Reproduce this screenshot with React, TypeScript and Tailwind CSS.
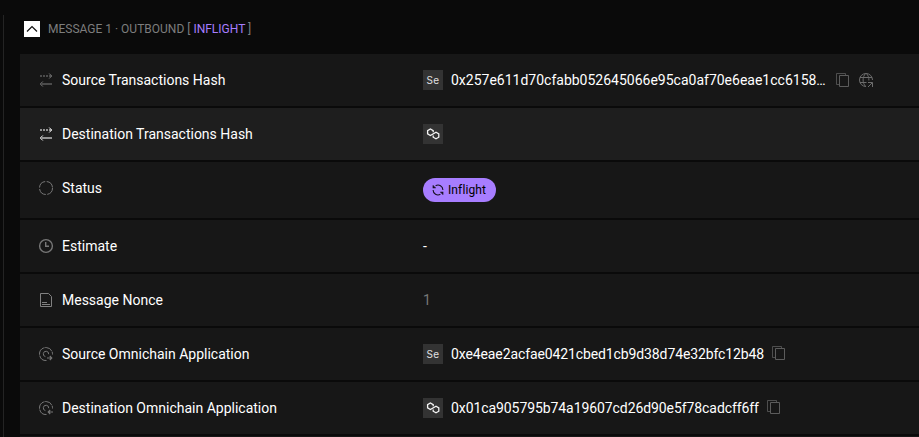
import type { ReactNode } from "react";

function TransferIcon({ bright = false }: { bright?: boolean }) {
  return (
    <svg width="16" height="16" viewBox="0 0 16 16" fill="none" className={bright ? "text-[#f4f4f4]" : "text-[#777]"}>
      <path d="M2 4h2M5 4h2M8 4h2" stroke="currentColor" strokeWidth="2" strokeOpacity=".55" />
      <path d="M11 4h2.5M3.5 12H14" stroke="currentColor" strokeWidth="2" strokeOpacity=".55" />
      <path d="M11.2 1.5 13.7 4l-2.5 2.5M4.8 9.5 2.3 12l2.5 2.5" stroke="currentColor" />
    </svg>
  );
}

function StatusIcon() {
  return (
    <svg width="16" height="16" viewBox="0 0 16 16" fill="none">
      <circle cx="8" cy="8" r="6.5" stroke="#777" strokeDasharray="8.6 1.6" />
    </svg>
  );
}

function ClockIcon() {
  return (
    <svg width="16" height="16" viewBox="0 0 16 16" fill="none" stroke="#777">
      <circle cx="8" cy="8" r="6.4" strokeWidth="1.4" />
      <path d="M7.7 4v4.3H11" strokeWidth="1.4" />
    </svg>
  );
}

function DocIcon() {
  return (
    <svg width="16" height="16" viewBox="0 0 16 16" fill="none" stroke="#808080">
      <path d="M2.5 1.5h8l3 3v10h-11zM4 10.5h5M4 12.5h8" />
    </svg>
  );
}

function AppIcon({ incoming = false }: { incoming?: boolean }) {
  return (
    <svg width="16" height="16" viewBox="0 0 16 16" fill="none" stroke="#777">
      <path d="M8.5 14.5A6.5 6.5 0 1 1 14.5 8.5" strokeDasharray="9 .6" />
      <path d="M7.4 10.6A2.7 2.7 0 1 1 10.7 8.2" />
      {incoming ? (
        <path d="M15 12H10.5M12.2 10l-2 2 2 2" strokeWidth="1.1" />
      ) : (
        <path d="M9 12h4.5M11.8 10l2 2-2 2" strokeWidth="1.1" />
      )}
    </svg>
  );
}

function CopyIcon() {
  return (
    <svg width="14" height="16" viewBox="0 0 14 16" fill="none" stroke="#5c5c5c" className="shrink-0">
      <path d="M3.5 3.5h9v11h-9z" />
      <path d="M3.5 12.5h-3V1.5h9v2" strokeOpacity=".8" />
    </svg>
  );
}

function GlobeIcon() {
  return (
    <svg width="16" height="16" viewBox="0 0 16 16" fill="none" stroke="#6c6c6c" className="shrink-0">
      <path d="M8 14.5A6.5 6.5 0 1 1 14.5 8" />
      <path d="M2 5.5h12M2 10.5h6.5M7.5 14.2C4.3 11 4.3 5 7.5 1.6M8.5 1.6c1.8 2 2.5 4.2 2.4 6.9" />
      <path d="M10 10.5h4.5V15M14.3 10.7 10 15" />
    </svg>
  );
}

function SeChip() {
  return (
    <span className="flex size-5 shrink-0 items-center justify-center bg-[#333] font-['Inter',sans-serif] text-[10px] leading-none tracking-[0.4px] text-[#e0e0e0]">
      Se
    </span>
  );
}

function PolygonChip() {
  return (
    <span className="flex size-5 shrink-0 items-center justify-center bg-[#333]">
      <svg width="20" height="20" viewBox="0 0 20 20" fill="none" stroke="#f4f4f4" strokeWidth="1.3">
        <path d="M10.2 8.2V6.6L7.4 5 4.6 6.6v3.3l2.8 1.6 5.6-3.2 2.8 1.6v3.3L13 14.8l-2.8-1.6v-1.7" />
      </svg>
    </span>
  );
}

function Row({ icon, label, children, className = "h-13 bg-[#171717]" }: { icon: ReactNode; label: string; children: ReactNode; className?: string }) {
  return (
    <div className={`flex shrink-0 items-start pt-4 pl-[18px] ${className}`}>
      <div className="flex h-5 w-[385px] shrink-0 items-center gap-2">
        {icon}
        <span>{label}</span>
      </div>
      <div className="flex min-h-5 items-center gap-2">{children}</div>
    </div>
  );
}

export default function App() {
  return (
    <div className="flex h-[437px] w-[919px] overflow-hidden bg-[#0a0a0a] pl-[3px] font-['Roboto',sans-serif] text-sm leading-5 text-white">
      <div className="mt-[15px] w-px shrink-0 bg-[#242424]" />
      <main className="ml-4 flex min-w-0 flex-1 flex-col">
        <header className="flex h-[54px] shrink-0 items-center pt-1 pl-1 text-xs text-[#7d7d7d]">
          <button className="flex size-4 items-center justify-center bg-white">
            <svg width="16" height="16" viewBox="0 0 16 16" fill="none" stroke="#111" strokeWidth="1.2">
              <path d="m3 10.5 5-5 5 5" />
            </svg>
          </button>
          <span className="ml-2 whitespace-pre">
            MESSAGE 1 · OUTBOUND [ <span className="text-[#a77dff]">INFLIGHT</span> ]
          </span>
        </header>
        <div className="flex flex-col gap-0.5">
          <Row icon={<TransferIcon />} label="Source Transactions Hash">
            <SeChip />
            <span className="w-[377px] whitespace-nowrap">0x257e611d70cfabb052645066e95ca0af70e6eae1cc6158…</span>
            <span className="flex items-center gap-2">
              <CopyIcon />
              <GlobeIcon />
            </span>
          </Row>
          <Row icon={<TransferIcon bright />} label="Destination Transactions Hash" className="h-13 bg-[#1e1e1e]">
            <PolygonChip />
          </Row>
          <Row icon={<StatusIcon />} label="Status" className="h-14 bg-[#171717]">
            <span className="flex h-6 w-[73px] items-center gap-[3px] rounded-full bg-[#a77dff] pl-2 text-xs tracking-[0.11px] text-black">
              <svg width="14" height="14" viewBox="0 0 14 14" fill="none" stroke="#171020" strokeWidth="1.1">
                <path d="M4.6 2.7A4.9 4.9 0 0 1 11.9 7M9.4 11.3A4.9 4.9 0 0 1 2.1 7M2.2 2.2v2.6h2.6M11.8 11.8V9.2H9.2M2.3 4.7l1.2-1.2M11.7 9.3l-1.2 1.2" />
              </svg>
              Inflight
            </span>
          </Row>
          <Row icon={<ClockIcon />} label="Estimate">-</Row>
          <Row icon={<DocIcon />} label="Message Nonce">
            <span className="text-[#777]">1</span>
          </Row>
          <Row icon={<AppIcon />} label="Source Omnichain Application">
            <SeChip />
            <span className="tracking-[-0.11px]">0xe4eae2acfae0421cbed1cb9d38d74e32bfc12b48</span>
            <span className="pb-[3px]"><CopyIcon /></span>
          </Row>
          <Row icon={<AppIcon incoming />} label="Destination Omnichain Application">
            <PolygonChip />
            <span className="tracking-[-0.08px]">0x01ca905795b74a19607cd26d90e5f78cadcff6ff</span>
            <span className="pb-[3px]"><CopyIcon /></span>
          </Row>
          <div className="h-13 shrink-0 bg-[#171717]" />
        </div>
      </main>
    </div>
  );
}
